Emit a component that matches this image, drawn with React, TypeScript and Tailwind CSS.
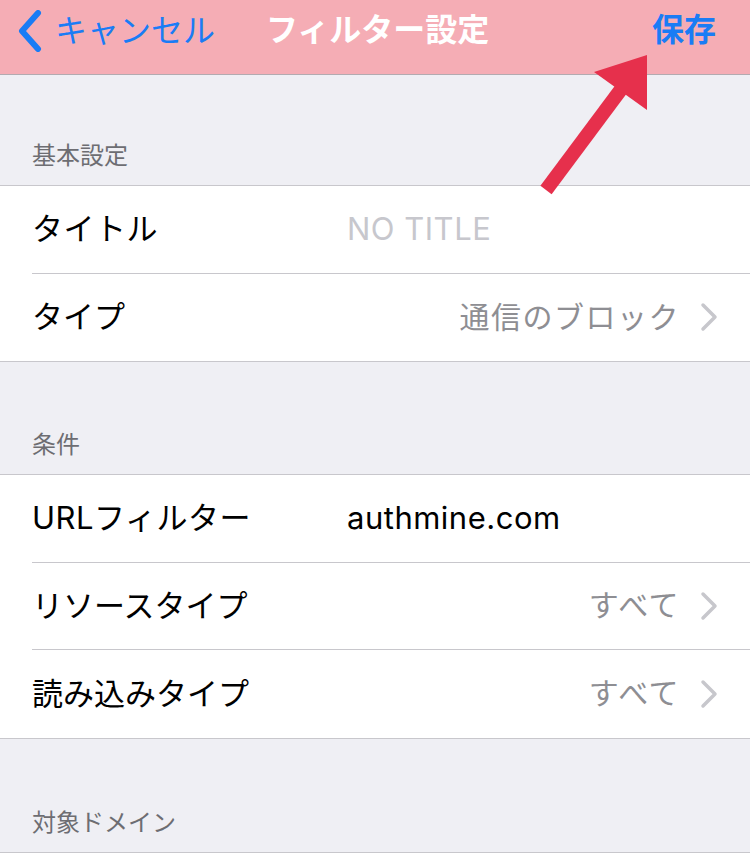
import React from 'react';

const font = { fontFamily: 'Inter, "Noto Sans CJK JP", sans-serif' };

type Row = { label: string; value: string; kind: 'placeholder' | 'text' | 'link' };

const Chevron = () => (
  <svg width="18" height="30" viewBox="0 0 18 30" className="ml-5">
    <path d="M3 3 L15 15 L3 27" fill="none" stroke="#c7c7cc" strokeWidth="3.5" strokeLinecap="round" strokeLinejoin="round" />
  </svg>
);

const SectionHeader = ({ title, height }: { title: string; height: string }) => (
  <div className={`flex items-end px-8 pb-[17px] ${height} border-b border-[#c8c7cc]`}>
    <span className="text-[24px] leading-none text-[#6d6d72]">{title}</span>
  </div>
);

const TableRow = ({ row, last }: { row: Row; last: boolean }) => (
  <div className="pl-8 bg-white">
    <div className={`flex items-center h-[87.5px] pr-8 ${last ? '' : 'border-b border-[#c8c7cc]'}`}>
      {row.kind === 'link' ? (
        <>
          <span className="text-[31px] text-black flex-1">{row.label}</span>
          <span className="text-[30px] text-[#8e8e93] tracking-[1.5px]">{row.value}</span>
          <Chevron />
        </>
      ) : (
        <>
          <span className="text-[31px] text-black w-[315px] tracking-[0.5px]">{row.label}</span>
          <span className={`text-[31px] tracking-[0.5px] ${row.kind === 'placeholder' ? 'text-[#c7c7cd]' : 'text-black'}`}>{row.value}</span>
        </>
      )}
    </div>
  </div>
);

const Group = ({ rows }: { rows: Row[] }) => (
  <div className="bg-white border-b border-[#c8c7cc]">
    {rows.map((r, i) => (
      <TableRow key={r.label} row={r} last={i === rows.length - 1} />
    ))}
  </div>
);

export default function App() {
  const basic: Row[] = [
    { label: 'タイトル', value: 'NO TITLE', kind: 'placeholder' },
    { label: 'タイプ', value: '通信のブロック', kind: 'link' },
  ];
  const cond: Row[] = [
    { label: 'URLフィルター', value: 'authmine.com', kind: 'text' },
    { label: 'リソースタイプ', value: 'すべて', kind: 'link' },
    { label: '読み込みタイプ', value: 'すべて', kind: 'link' },
  ];

  return (
    <div className="relative w-[750px] h-[855px] overflow-hidden bg-[#efeff4]" style={font}>
      {/* Nav bar */}
      <div className="relative flex items-start h-[75px] bg-[#f5adb5] border-b border-[#b3aab0] pt-[10px]">
        <div className="flex items-center pl-[17px] text-[#1a7cf5]">
          <svg width="26" height="42" viewBox="0 0 26 42">
            <path d="M21 3 L5 21 L21 39" fill="none" stroke="#1a7cf5" strokeWidth="6" strokeLinecap="round" strokeLinejoin="round" />
          </svg>
          <span className="ml-[12px] text-[32px] leading-[40px]">キャンセル</span>
        </div>
        <span className="absolute left-[266px] top-[10px] text-[32px] leading-[40px] font-bold text-white">フィルター設定</span>
        <span className="ml-auto mr-[34px] text-[32px] leading-[40px] font-bold text-[#1a7cf5]">保存</span>
      </div>

      <SectionHeader title="基本設定" height="h-[111px]" />
      <Group rows={basic} />

      <SectionHeader title="条件" height="h-[113px]" />
      <Group rows={cond} />

      <SectionHeader title="対象ドメイン" height="h-[114px]" />
      <div className="bg-white h-[10px]" />

      {/* Annotation arrow */}
      <svg className="absolute left-0 top-0 pointer-events-none" width="750" height="855" viewBox="0 0 750 855">
        <line x1="546" y1="190" x2="628" y2="80" stroke="#e6304c" strokeWidth="14" />
        <polygon points="647,55 594,72 647,110" fill="#e6304c" />
      </svg>
    </div>
  );
}
